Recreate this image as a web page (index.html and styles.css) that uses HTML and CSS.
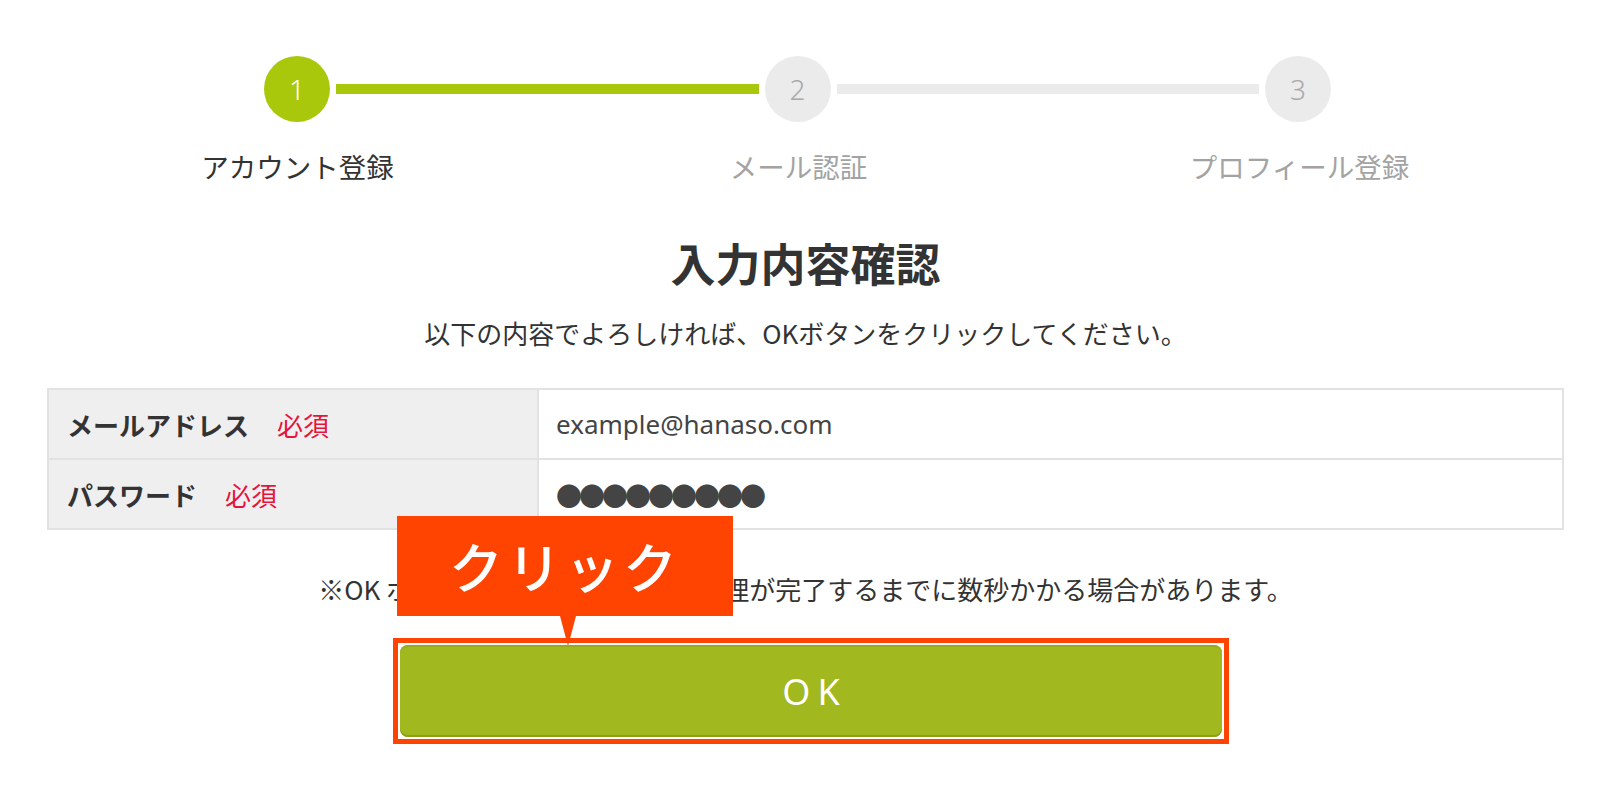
FILE: index.html
```html
<!DOCTYPE html>
<html lang="ja">
<head>
<meta charset="utf-8">
<title>入力内容確認</title>
<link rel="stylesheet" href="styles.css">
</head>
<body>
<main class="page">
  <div class="stepper">
    <div class="step-circle is-active">1</div>
    <div class="step-line is-active"></div>
    <div class="step-circle">2</div>
    <div class="step-line"></div>
    <div class="step-circle">3</div>
  </div>
  <div class="step-labels">
    <div class="step-label is-active">アカウント登録</div>
    <div class="step-label">メール認証</div>
    <div class="step-label">プロフィール登録</div>
  </div>

  <h1 class="title">入力内容確認</h1>
  <p class="lead">以下の内容でよろしければ、OKボタンをクリックしてください。</p>

  <table class="confirm">
    <tr>
      <th><span class="label">メールアドレス</span><span class="req">必須</span></th>
      <td class="value">example@hanaso.com</td>
    </tr>
    <tr>
      <th><span class="label">パスワード</span><span class="req">必須</span></th>
      <td class="value dots">●●●●●●●●●</td>
    </tr>
  </table>

  <p class="note">※OK ボタンをクリックしてから処理が完了するまでに数秒かかる場合があります。</p>

  <div class="frame">
    <button class="ok-btn" type="button">OK</button>
    <div class="callout">クリック</div>
  </div>
</main>
</body>
</html>
```

FILE: styles.css
```css
html, body {
  margin: 0;
  padding: 0;
  background: #ffffff;
}

body {
  font-family: "Noto Sans", "Noto Sans CJK JP", sans-serif;
  color: #333333;
}

.page {
  width: 1517px;
  margin-left: 47px;
  padding-top: 56px;
}

/* stepper */
.stepper {
  display: flex;
  align-items: center;
  width: 1067px;
  margin-left: 217px;
  gap: 6px;
}

.step-circle {
  width: 66px;
  height: 66px;
  flex: 0 0 66px;
  border-radius: 50%;
  background: #ebebeb;
  color: #a9a9a9;
  font-family: "Noto Sans", sans-serif;
  font-weight: 300;
  font-size: 28px;
  line-height: 66px;
  text-align: center;
}

.step-circle.is-active {
  background: #a9c70b;
  color: #ffffff;
}

.step-line {
  flex: 1 1 auto;
  height: 10px;
  background: #ebebeb;
}

.step-line.is-active {
  background: #a9c70b;
}

.step-labels {
  display: grid;
  grid-template-columns: repeat(3, 501px);
  margin-top: 24px;
}

.step-label {
  text-align: center;
  font-family: "Noto Sans CJK JP", sans-serif;
  font-size: 27.5px;
  line-height: 40px;
  color: #a3a3a3;
}

.step-label.is-active {
  color: #333333;
}

/* heading */
.title {
  margin: 47px 0 0;
  text-align: center;
  font-family: "Noto Sans CJK JP", sans-serif;
  font-size: 45px;
  font-weight: 700;
  line-height: 60px;
  color: #333333;
}

.lead {
  margin: 20px 0 0;
  text-align: center;
  font-family: "Noto Sans CJK JP", sans-serif;
  font-size: 26px;
  line-height: 40px;
  color: #333333;
}

/* table */
.confirm {
  width: 100%;
  margin-top: 35px;
  border-collapse: collapse;
}

.confirm th,
.confirm td {
  border: 2px solid #e2e2e2;
  height: 68px;
  padding: 0;
  vertical-align: middle;
}

.confirm th {
  width: 470px;
  background: #efefef;
  text-align: left;
  padding-left: 18px;
  font-family: "Noto Sans CJK JP", sans-serif;
  font-size: 26px;
  font-weight: 700;
  color: #333333;
}

.label {
  margin-right: 28px;
}

.req {
  color: #e8133b;
  font-weight: 400;
}

.confirm td {
  padding-left: 17px;
  font-size: 26px;
  color: #444444;
}

.dots {
  font-family: "Noto Sans CJK JP", sans-serif;
  letter-spacing: -3px;
  font-size: 26px;
  color: #404040;
}

/* note */
.note {
  margin: 39px 0 0;
  text-align: center;
  font-family: "Noto Sans CJK JP", sans-serif;
  font-size: 26px;
  line-height: 40px;
  color: #333333;
}

/* button frame */
.frame {
  position: relative;
  width: 822px;
  margin: 29px 0 0 346px;
  border: 5px solid #ff4300;
  padding: 2px;
}

.ok-btn {
  display: block;
  width: 100%;
  height: 92px;
  border: none;
  border-radius: 8px;
  background: #a2b81f;
  box-shadow: inset 0 -2px 0 #8da01a, inset 0 2px 0 #97ab1c;
  color: #ffffff;
  font-family: "Noto Sans", sans-serif;
  font-size: 36px;
  letter-spacing: 7px;
  text-indent: 7px;
  cursor: pointer;
}

.callout {
  position: absolute;
  left: -1px;
  top: -127px;
  width: 336px;
  height: 100px;
  background: #ff4300;
  color: #ffffff;
  font-family: "Noto Sans CJK JP", sans-serif;
  font-size: 54px;
  font-weight: 500;
  letter-spacing: 4px;
  line-height: 100px;
  text-align: center;
}

.callout::after {
  content: "";
  position: absolute;
  left: 163px;
  top: 100px;
  border-left: 8px solid transparent;
  border-right: 8px solid transparent;
  border-top: 30px solid #ff4300;
}
```
